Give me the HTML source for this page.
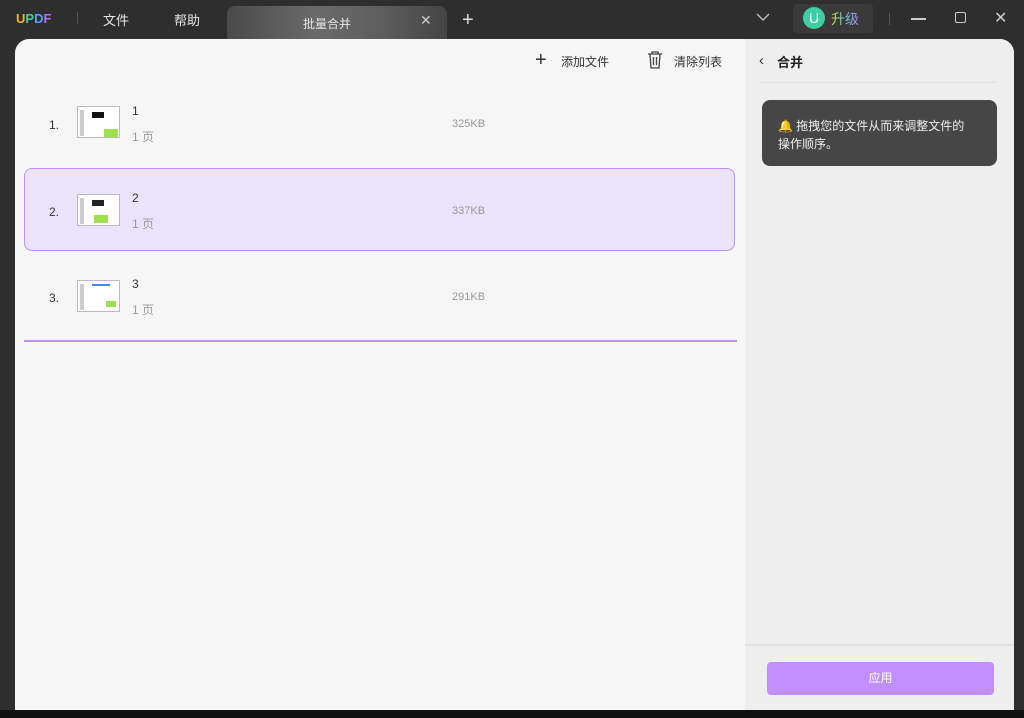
<!DOCTYPE html>
<html><head><meta charset="utf-8"><style>
*{margin:0;padding:0;box-sizing:border-box}
body{width:1024px;height:718px;background:#2e2e2e;position:relative;overflow:hidden;font-family:"Liberation Sans","Noto Sans CJK SC",sans-serif}
.a{position:absolute;white-space:nowrap}
.t{color:#e6e6e6;font-size:13px}
.thumb{position:absolute;width:43px;height:32px;background:#fff;border:1px solid #bbb}
.thumb i{position:absolute;display:block}
</style></head><body>
<div class="a" style="left:0;top:710px;width:1024px;height:8px;background:#111"></div>
<div class="a" style="left:16px;top:11px;font-size:13px;font-weight:bold"><span style="color:#f5b800">U</span><span style="color:#4cc7a0">P</span><span style="color:#5aa0f0">D</span><span style="color:#b070f0">F</span></div>
<div class="a" style="left:77px;top:12px;width:1px;height:12px;background:#555"></div>
<div class="a t" style="left:103px;top:10px">文件</div>
<div class="a t" style="left:174px;top:10px">帮助</div>
<div class="a" style="left:227px;top:6px;width:220px;height:34px;border-radius:8px 8px 0 0;background:linear-gradient(90deg,#4a4a4a,#6a6a6a 40%,#5e5e5e 70%,#444)"></div>
<div class="a t" style="left:303px;top:15px;font-size:12px">批量合并</div>
<div class="a" style="left:420px;top:12px;color:#ccc;font-size:14px">✕</div>
<div class="a" style="left:462px;top:9px;color:#ddd;font-size:20px;font-weight:300">+</div>
<svg class="a" style="left:756px;top:12px" width="14" height="10"><path d="M1 2l6 6 6-6" stroke="#bbb" stroke-width="1.5" fill="none"/></svg>
<div class="a" style="left:793px;top:4px;width:80px;height:29px;background:#3a3a3a;border-radius:4px"></div>
<div class="a" style="left:803px;top:7px;width:22px;height:22px;border-radius:50%;background:#3fcfa6;color:#fff;font-size:14px;text-align:center;line-height:22px">U</div>
<div class="a" style="left:831px;top:9px;font-size:14px;background:linear-gradient(90deg,#c8e040,#6fd0e0,#b080f0);-webkit-background-clip:text;color:transparent">升级</div>
<div class="a" style="left:889px;top:13px;width:1px;height:12px;background:#555"></div>
<div class="a" style="left:911px;top:18px;width:15px;height:1.5px;background:#ccc"></div>
<div class="a" style="left:955px;top:12px;width:11px;height:11px;border:1.5px solid #ccc;border-radius:2px"></div>
<div class="a" style="left:994px;top:8px;color:#ccc;font-size:16px">✕</div>

<div class="a" style="left:15px;top:39px;width:999px;height:671px;background:#f6f6f6;border-radius:14px 14px 0 0;overflow:hidden">
  <div class="a" style="left:730px;top:0;width:269px;height:671px;background:#eeeeee"></div>
  <div class="a" style="left:730px;top:605px;width:269px;height:2px;background:#e2e2e2"></div>
  <div class="a" style="left:744px;top:43px;width:238px;height:1px;background:#e2e2e2"></div>
  <div class="a" style="left:744px;top:13px;color:#333;font-size:15px">‹</div>
  <div class="a" style="left:762px;top:13px;color:#222;font-size:13px;font-weight:bold">合并</div>
  <div class="a" style="left:747px;top:61px;width:235px;height:66px;background:#464646;border-radius:8px;color:#eee;font-size:12px;line-height:18px;padding:17px 0 0 16px;white-space:normal"><span style="color:#f5b800">🔔</span> 拖拽您的文件从而来调整文件的<br>操作顺序。</div>
  <div class="a" style="left:752px;top:623px;width:227px;height:33px;background:#c18ffd;border-radius:4px;color:#fff;font-size:12px;text-align:center;line-height:33px">应用</div>
  <div class="a" style="left:520px;top:10px;color:#333;font-size:20px;font-weight:300">+</div>
  <div class="a" style="left:546px;top:14px;color:#333;font-size:12px">添加文件</div>
  <svg class="a" style="left:632px;top:12px" width="16" height="18"><path d="M1 3h14M5 3V1h6v2M3 3l1 14h8l1-14M6.5 6v8M9.5 6v8" stroke="#444" stroke-width="1.3" fill="none"/></svg>
  <div class="a" style="left:659px;top:14px;color:#333;font-size:12px">清除列表</div>
  <div class="a" style="left:9px;top:129px;width:711px;height:83px;background:#ebe2fb;border:1px solid #c18ffd;border-radius:8px"></div>
  <div class="a" style="left:9px;top:301px;width:713px;height:2px;background:#c18ffd"></div>
</div>
<div class="a" style="left:15px;top:39px">
 <div class="a" style="left:34px;top:79px;font-size:12px;color:#333">1.</div>
 <div class="thumb" style="left:62px;top:67px"><i style="left:14px;top:5px;width:12px;height:6px;background:#111"></i><i style="left:2px;top:3px;width:4px;height:26px;background:#ccc"></i><i style="left:26px;top:22px;width:14px;height:8px;background:#9ee050"></i></div>
 <div class="a" style="left:117px;top:65px;font-size:12px;color:#333">1</div>
 <div class="a" style="left:117px;top:89px;font-size:12px;color:#999">1 页</div>
 <div class="a" style="left:437px;top:79px;font-size:11px;color:#999">325KB</div>

 <div class="a" style="left:34px;top:166px;font-size:12px;color:#333">2.</div>
 <div class="thumb" style="left:62px;top:155px"><i style="left:14px;top:5px;width:12px;height:6px;background:#222"></i><i style="left:2px;top:3px;width:4px;height:26px;background:#ccc"></i><i style="left:16px;top:20px;width:14px;height:8px;background:#9ee050"></i></div>
 <div class="a" style="left:117px;top:152px;font-size:12px;color:#333">2</div>
 <div class="a" style="left:117px;top:176px;font-size:12px;color:#999">1 页</div>
 <div class="a" style="left:437px;top:166px;font-size:11px;color:#999">337KB</div>

 <div class="a" style="left:34px;top:252px;font-size:12px;color:#333">3.</div>
 <div class="thumb" style="left:62px;top:241px"><i style="left:14px;top:3px;width:18px;height:2px;background:#48f"></i><i style="left:2px;top:3px;width:4px;height:26px;background:#ccc"></i><i style="left:28px;top:20px;width:10px;height:6px;background:#9ee050"></i></div>
 <div class="a" style="left:117px;top:238px;font-size:12px;color:#333">3</div>
 <div class="a" style="left:117px;top:262px;font-size:12px;color:#999">1 页</div>
 <div class="a" style="left:437px;top:252px;font-size:11px;color:#999">291KB</div>
</div>
</body></html>
